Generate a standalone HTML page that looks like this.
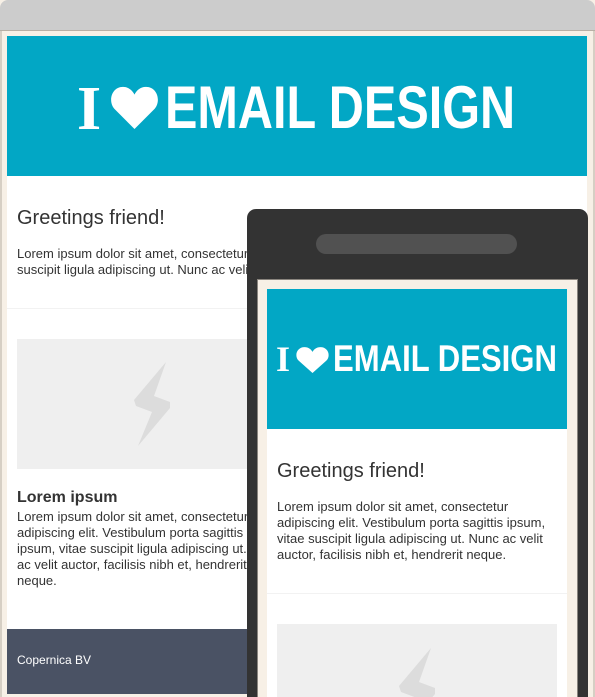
<!DOCTYPE html>
<html style="overflow:hidden;width:595px;height:697px"><head><meta charset="utf-8"><style>
*{margin:0;padding:0;box-sizing:border-box}
body{width:595px;height:697px;overflow:hidden;background:#f7f0e6;font-family:"Liberation Sans",sans-serif;color:#333;position:relative}
.a{position:absolute}
.top{left:0;top:0;width:595px;height:31px;background:#cccccc;border-radius:8px 8px 0 0;border-bottom:1px solid #b8b0a6}
.lb{left:0;top:31px;width:2px;height:666px;background:#d6cfc4}
.rb{right:0;top:31px;width:2px;height:666px;background:#d6cfc4}
.page{left:7px;top:36px;width:580px;height:658px;background:#fff}
.ban{background:#02a7c5;color:#fff;font-weight:bold;overflow:hidden}
.t{position:absolute;white-space:nowrap;transform-origin:0 0;line-height:1}
p{font-size:13px;line-height:16px;white-space:nowrap;overflow:hidden}
</style></head><body>
<div class="a top"></div><div class="a lb"></div><div class="a rb"></div>
<div class="a page"></div>
<div class="a ban" style="left:7px;top:36px;width:580px;height:140px">
 <div class="t" style="left:70px;top:42px;font-size:62px;font-family:'Liberation Serif',serif">I</div>
 <svg class="a" style="left:103px;top:49px" width="49" height="44" viewBox="0 0 50 46"><path d="M25 46 L4 25 C-3 17 1 2 13 2 C19 2 23 6 25 10 C27 6 31 2 37 2 C49 2 53 17 46 25 Z" fill="#fff"/></svg>
 <div class="t" style="left:158px;top:42px;font-size:60px;transform:scaleX(0.81)">EMAIL DESIGN</div>
</div>
<div class="a" style="left:17px;top:207px;font-size:20px">Greetings friend!</div>
<p class="a" style="left:17px;top:246px;width:570px">Lorem ipsum dolor sit amet, consectetur adipiscing elit. Vestibulum porta sagittis ipsum, vitae<br>suscipit ligula adipiscing ut. Nunc ac velit auctor, facilisis nibh et, hendrerit neque.</p>
<div class="a" style="left:7px;top:308px;width:580px;height:1px;background:#f2f2f2"></div>
<div class="a" style="left:17px;top:339px;width:300px;height:130px;background:#efefef"></div>
<svg class="a" style="left:0;top:0" width="300" height="500"><polygon points="166,362 134,400 136,406 152,412 138,446 170,408 170,402 154,396" fill="#dcdcdc"/></svg>
<div class="a" style="left:17px;top:489px;font-size:16px;font-weight:bold">Lorem ipsum</div>
<p class="a" style="left:17px;top:509px;width:300px">Lorem ipsum dolor sit amet, consectetur<br>adipiscing elit. Vestibulum porta sagittis<br>ipsum, vitae suscipit ligula adipiscing ut. Nunc<br>ac velit auctor, facilisis nibh et, hendrerit<br>neque.</p>
<div class="a" style="left:7px;top:629px;width:580px;height:65px;background:#4a5264;color:#fff;font-size:12px;padding:24px 10px">Copernica BV</div>

<div class="a" style="left:247px;top:209px;width:341px;height:488px;background:#333;border-radius:9px 9px 0 0"></div>
<div class="a" style="left:316px;top:234px;width:201px;height:20px;background:#515151;border-radius:10px"></div>
<div class="a" style="left:257px;top:279px;width:321px;height:418px;background:#f7f0e6;border:1px solid #8a857e;border-bottom:none"></div>
<div class="a" style="left:267px;top:429px;width:300px;height:268px;background:#fff"></div>
<div class="a ban" style="left:267px;top:289px;width:300px;height:140px">
 <div class="t" style="left:9px;top:52px;font-size:36px;font-family:'Liberation Serif',serif">I</div>
 <svg class="a" style="left:29px;top:57px" width="33" height="27" viewBox="0 0 50 46" preserveAspectRatio="none"><path d="M25 46 L4 25 C-3 17 1 2 13 2 C19 2 23 6 25 10 C27 6 31 2 37 2 C49 2 53 17 46 25 Z" fill="#fff"/></svg>
 <div class="t" style="left:66px;top:51px;font-size:37px;transform:scaleX(0.84)">EMAIL DESIGN</div>
</div>
<div class="a" style="left:277px;top:460px;font-size:20px">Greetings friend!</div>
<p class="a" style="left:277px;top:499px;width:290px">Lorem ipsum dolor sit amet, consectetur<br>adipiscing elit. Vestibulum porta sagittis ipsum,<br>vitae suscipit ligula adipiscing ut. Nunc ac velit<br>auctor, facilisis nibh et, hendrerit neque.</p>
<div class="a" style="left:267px;top:593px;width:300px;height:1px;background:#f2f2f2"></div>
<div class="a" style="left:277px;top:624px;width:280px;height:73px;background:#efefef;overflow:hidden">
 <svg class="a" style="left:118px;top:24px" width="40" height="49"><polygon points="36,0 4,38 6,44 22,50 8,84 40,46 40,40 24,34" fill="#dcdcdc"/></svg>
</div>
</body></html>
